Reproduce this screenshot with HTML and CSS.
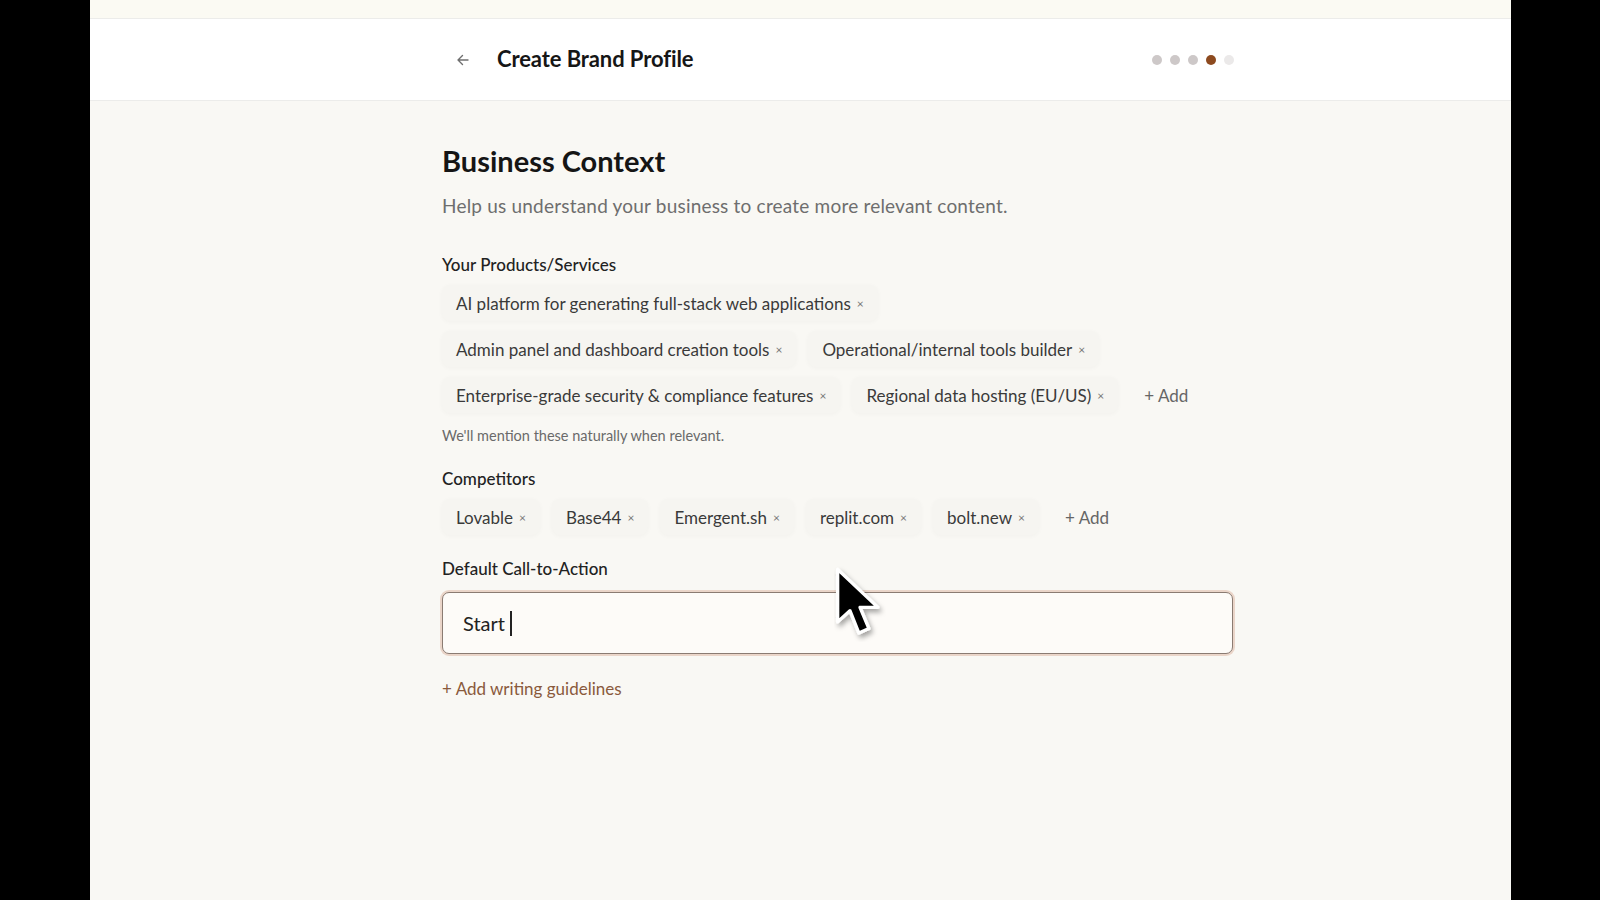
FILE: index.html
```html
<!DOCTYPE html>
<html lang="en">
<head>
    <meta charset="UTF-8">
    <meta name="viewport" content="width=device-width, initial-scale=1.0">
    <title>Create Brand Profile</title>
    <link rel="stylesheet" href="styles.css">
</head>
<body>
    <div class="screen">
        <div class="topstrip"></div>

        <!-- header -->
        <div class="header">
            <div class="header-inner">
                <div class="header-left">
                    <span class="back">
                        <svg width="16" height="16" viewBox="0 0 16 16" fill="none" stroke="#6f6f6f" stroke-width="1.4" stroke-linecap="round" stroke-linejoin="round">
                            <path d="M13 8H3M7.5 3.5L3 8l4.5 4.5"/>
                        </svg>
                    </span>
                    <h1 class="page-title">Create Brand Profile</h1>
                </div>
                <div class="steps">
                    <span class="dot"></span>
                    <span class="dot"></span>
                    <span class="dot"></span>
                    <span class="dot active"></span>
                    <span class="dot light"></span>
                </div>
            </div>
        </div>

        <!-- form -->
        <div class="main">
            <div class="form">
                <h2 class="section-title">Business Context</h2>
                <p class="section-sub">Help us understand your business to create more relevant content.</p>

                <div class="field first">
                    <div class="label">Your Products/Services</div>
                    <div class="chips">
                        <div class="chip-row">
                            <span class="chip">AI platform for generating full-stack web applications <i>×</i></span>
                        </div>
                        <div class="chip-row">
                            <span class="chip">Admin panel and dashboard creation tools <i>×</i></span>
                            <span class="chip">Operational/internal tools builder <i>×</i></span>
                        </div>
                        <div class="chip-row">
                            <span class="chip">Enterprise-grade security &amp; compliance features <i>×</i></span>
                            <span class="chip">Regional data hosting (EU/US) <i>×</i></span>
                            <span class="chip add">+ Add</span>
                        </div>
                    </div>
                    <div class="hint">We'll mention these naturally when relevant.</div>
                </div>

                <div class="field">
                    <div class="label">Competitors</div>
                    <div class="chips">
                        <div class="chip-row">
                            <span class="chip">Lovable <i>×</i></span>
                            <span class="chip">Base44 <i>×</i></span>
                            <span class="chip">Emergent.sh <i>×</i></span>
                            <span class="chip">replit.com <i>×</i></span>
                            <span class="chip">bolt.new <i>×</i></span>
                            <span class="chip add">+ Add</span>
                        </div>
                    </div>
                </div>

                <div class="field">
                    <div class="label">Default Call-to-Action</div>
                    <div class="input">Start<span class="caret"></span></div>
                </div>

                <a class="guidelines" href="#">+ Add writing guidelines</a>
            </div>
        </div>

        <!-- mouse pointer captured in the recording -->
        <svg class="pointer" width="52" height="76" viewBox="0 0 46 68">
            <defs>
                <filter id="sh" x="-30%" y="-30%" width="160%" height="160%">
                    <feDropShadow dx="2" dy="3" stdDeviation="2.5" flood-color="#000" flood-opacity="0.35"/>
                </filter>
            </defs>
            <path d="M3 3 L3 50 L14 40 L22 60 L31 56 L23 37 L39 37 Z" fill="#000" stroke="#fff" stroke-width="3" stroke-linejoin="round" filter="url(#sh)"/>
        </svg>
    </div>
</body>
</html>
```

FILE: styles.css
```css
*{box-sizing: border-box;}

body{margin: 0; background: #000; font-family: "Lato", "Noto Sans", sans-serif; color: #1d1d1d;}

.screen{position: relative; margin-left: 90px; width: 1421px; height: 900px; background: #f9f8f4; display: flex; flex-direction: column;}

.topstrip{height: 18px; background: #fbfaf3;}

.header{height: 83px; background: #fff; border-top: 1px solid #ececea; border-bottom: 1px solid #ececea;}
.header-inner{display: flex; align-items: center; justify-content: space-between; height: 100%; padding-bottom: 2px; margin-left: 365px; width: 780px;}
.header-left{display: flex; align-items: center; gap: 26px;}
.back{display: flex; width: 16px; height: 16px; margin-top: 2px;}
.page-title{margin: 0; font-size: 22px; font-weight: 700; letter-spacing: -0.1px; color: #161616;}

.steps{display: flex; gap: 8px; margin-right: 1px; margin-top: 2px;}
.dot{width: 10px; height: 10px; border-radius: 50%; background: #cdc8c8;}
.dot.active{background: #8d4a1f;}
.dot.light{background: #ebe9e9;}

.main{flex: 1;}
.form{margin-left: 352px; width: 791px; padding-top: 41px;}

.section-title{margin: 0; font-size: 29px; font-weight: 700; color: #151515; line-height: 38px;}
.section-sub{margin: 13px 0 0; font-size: 19px; letter-spacing: 0.2px; color: #6e6e6e; line-height: 26px;}

.field{margin-top: 23px;}
.field.first{margin-top: 35px;}
.label{font-size: 17px; font-weight: 500; color: #222; line-height: 22px;}

.chips{display: flex; flex-direction: column; gap: 10px; margin-top: 9px;}
.chip-row{display: flex; gap: 12px;}
.chip{display: inline-flex; align-items: center; height: 36px; padding: 0 14px; border-radius: 8px; background: #f6f5f1; font-size: 17px; color: #3a3a3a; box-shadow: 0 1px 5px rgba(0,0,0,0.03);}
.chip i{font-style: normal; font-size: 12px; color: #777; margin-left: 6px;}
.chip.add{background: transparent; box-shadow: none; color: #666; padding: 0 14px;}

.hint{margin-top: 14px; font-size: 14.5px; color: #6a6a6a; line-height: 18px;}

.input{margin-top: 12px; height: 62px; border: 1.5px solid #8a7b72; border-radius: 7px; background: #fdfbf8; box-shadow: 0 0 0 2px rgba(205,150,120,0.35); display: flex; align-items: center; padding-left: 20px; font-size: 20px; color: #222;}
.caret{display: inline-block; width: 2px; height: 25px; background: #222; margin-left: 5px;}

.guidelines{display: inline-block; margin-top: 25px; font-size: 17px; line-height: 20px; color: #8a5a3c; text-decoration: none;}

.pointer{position: absolute; left: 744px; top: 566px;}
```
